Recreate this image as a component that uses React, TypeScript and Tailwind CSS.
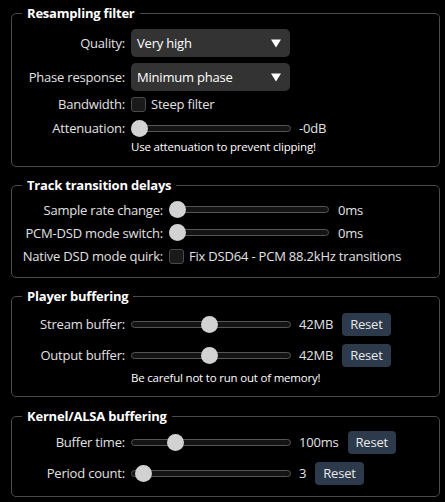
import React from 'react';

const font = { fontFamily: '"Open Sans", "Noto Sans", sans-serif' };

function Slider({ pos }: { pos: number }) {
  // pos: 0..1, thumb travel across the 160px track
  return (
    <div className="relative flex h-[17px] w-[160px] shrink-0 items-center">
      <div className="h-[7px] w-full rounded-full border border-[#555] bg-[#141414]" />
      <div
        className="absolute top-0 h-[17px] w-[17px] rounded-full bg-[#d2d2d2]"
        style={{ left: `${Math.round(pos * 143)}px` }}
      />
    </div>
  );
}

function Select({ value }: { value: string }) {
  return (
    <div className="flex h-full w-[159px] items-center justify-between rounded-[5px] bg-[#333] pl-[6px] pr-[9px] text-white">
      <span>{value}</span>
      <svg width="10" height="9" viewBox="0 0 10 9">
        <path d="M0 0.5 H10 L5 8.5 Z" fill="#fff" />
      </svg>
    </div>
  );
}

function Checkbox() {
  return (
    <div className="flex h-[15px] w-[15px] shrink-0 items-center justify-center rounded-[3px] border border-[#4a4a4a] bg-[#1a1a1a]" />
  );
}

function ResetButton() {
  return (
    <button className="flex h-[23px] items-center rounded-[4px] bg-[#2c3a4c] px-[8px] text-[#e8e8e8]">
      Reset
    </button>
  );
}

function Row({
  label,
  labelW,
  h,
  mt = '',
  children,
}: {
  label?: string;
  labelW: string;
  h: string;
  mt?: string;
  children: React.ReactNode;
}) {
  return (
    <div className={`flex items-center gap-[6px] whitespace-nowrap ${h} ${mt}`}>
      <div className={`${labelW} shrink-0 text-right`}>{label}</div>
      <div className="flex h-full items-center">{children}</div>
    </div>
  );
}

function Box({
  title,
  mt,
  pb,
  children,
}: {
  title: string;
  mt: string;
  pb: string;
  children: React.ReactNode;
}) {
  return (
    <fieldset className={`ml-[11px] w-[429px] rounded-[5px] border border-[#4b4b4b] px-[10px] ${mt} ${pb}`}>
      <legend className="px-[5px] text-[13px] leading-[18px] font-bold tracking-[-0.2px] text-white">{title}</legend>
      {children}
    </fieldset>
  );
}

export default function App() {
  const w1 = 'w-[103px]';
  const w2 = 'w-[141px]';
  return (
    <div
      className="h-[502px] w-[445px] bg-black pt-[4px] text-[13px] leading-[18px] tracking-[-0.2px] text-[#e2e2e2]"
      style={font}
    >
      <Box title="Resampling filter" mt="" pb="pb-[11px]">
        <Row label="Quality:" labelW={w1} h="h-[28px]" mt="mt-[7px]">
          <Select value="Very high" />
        </Row>
        <Row label="Phase response:" labelW={w1} h="h-[28px]" mt="mt-[6px]">
          <Select value="Minimum phase" />
        </Row>
        <Row label="Bandwidth:" labelW={w1} h="h-[26px]">
          <Checkbox />
          <span className="ml-[5px]">Steep filter</span>
        </Row>
        <Row label="Attenuation:" labelW={w1} h="h-[22px]">
          <Slider pos={0} />
          <span className="ml-[8px]">-0dB</span>
        </Row>
        <Row labelW={w1} h="h-[16px]">
          <span className="text-[11.5px] text-white">Use attenuation to prevent clipping!</span>
        </Row>
      </Box>

      <Box title="Track transition delays" mt="mt-[9px]" pb="pb-[9px]">
        <Row label="Sample rate change:" labelW={w2} h="h-[23px]" mt="mt-[4px]">
          <Slider pos={0} />
          <span className="ml-[9px]">0ms</span>
        </Row>
        <Row label="PCM-DSD mode switch:" labelW={w2} h="h-[23px]">
          <Slider pos={0} />
          <span className="ml-[9px]">0ms</span>
        </Row>
        <Row label="Native DSD mode quirk:" labelW={w2} h="h-[24px]">
          <Checkbox />
          <span className="ml-[5px]">Fix DSD64 - PCM 88.2kHz transitions</span>
        </Row>
      </Box>

      <Box title="Player buffering" mt="mt-[9px]" pb="pb-[10px]">
        <Row label="Stream buffer:" labelW={w1} h="h-[26px]" mt="mt-[6px]">
          <Slider pos={0.49} />
          <span className="ml-[8px]">42MB</span>
          <span className="ml-[9px]">
            <ResetButton />
          </span>
        </Row>
        <Row label="Output buffer:" labelW={w1} h="h-[26px]" mt="mt-[5px]">
          <Slider pos={0.49} />
          <span className="ml-[8px]">42MB</span>
          <span className="ml-[9px]">
            <ResetButton />
          </span>
        </Row>
        <Row labelW={w1} h="h-[16px]" mt="mt-[2px]">
          <span className="text-[11.5px] text-white">Be careful not to run out of memory!</span>
        </Row>
      </Box>

      <Box title="Kernel/ALSA buffering" mt="mt-[10px]" pb="pb-[10px]">
        <Row label="Buffer time:" labelW={w1} h="h-[26px]" mt="mt-[4px]">
          <Slider pos={0.255} />
          <span className="ml-[8px]">100ms</span>
          <span className="ml-[9px]">
            <ResetButton />
          </span>
        </Row>
        <Row label="Period count:" labelW={w1} h="h-[26px]" mt="mt-[5px]">
          <Slider pos={0.03} />
          <span className="ml-[8px]">3</span>
          <span className="ml-[9px]">
            <ResetButton />
          </span>
        </Row>
      </Box>
    </div>
  );
}
